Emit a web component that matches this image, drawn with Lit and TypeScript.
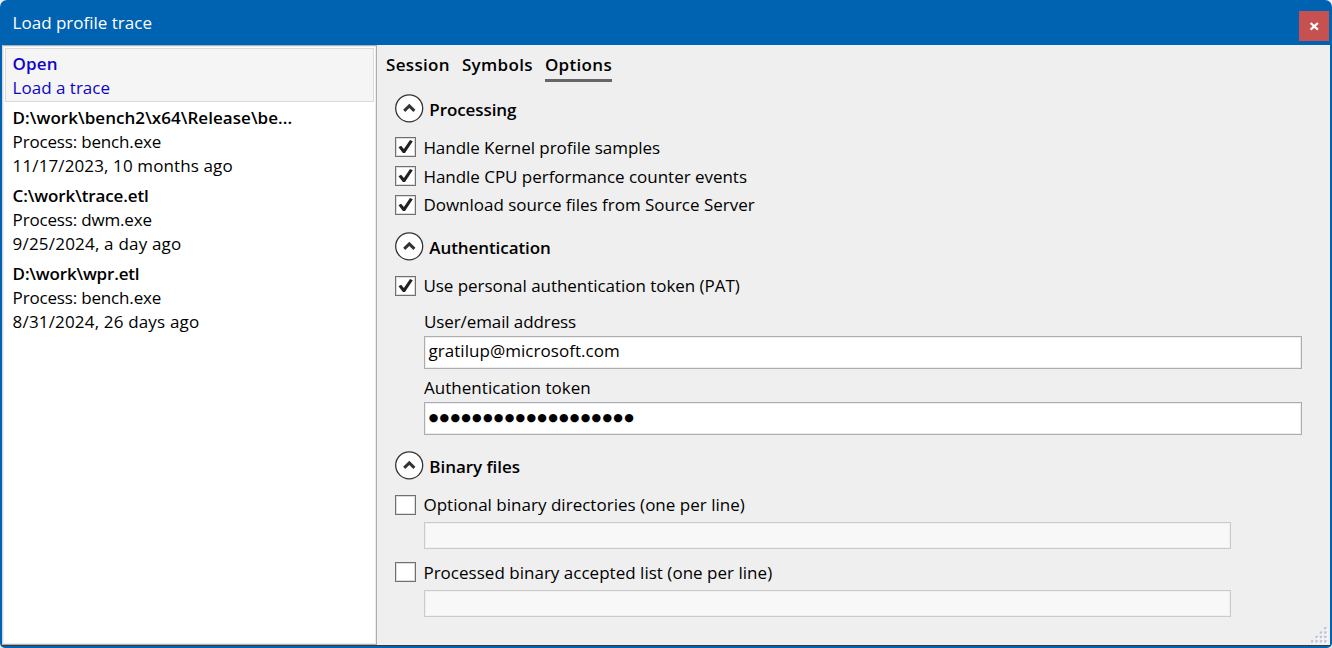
import { LitElement, html, svg, css } from "lit";
import { customElement, property } from "lit/decorators.js";
import { styleMap } from "lit/directives/style-map.js";

const text = (value: string, spacing = 0) =>
  html`<span style=${styleMap({ letterSpacing: `${spacing}px` })}>${value}</span>`;

@customElement("check-option")
class CheckOption extends LitElement {
  @property({ type: Boolean }) checked = false;
  @property() label = "";
  @property({ type: Number }) spacing = 0;

  static styles = css`
    :host { display: flex; height: 24px; }
    svg { flex: none; display: block; margin: var(--box-shift, 0) 7.4px 0 0; }
  `;

  render() {
    return html`
      <svg width="21" height="22" viewBox="0 0 21 22">
        <rect x="0.5" y="1.5" width="20" height="19" fill="#fff" stroke="#707070" />
        <rect x="1.5" y="2.5" width="18" height="17" fill="none" stroke="#dcdcdc" />
        ${this.checked
          ? svg`<path d="M3.5 11.2 L6.1 9.7 L8.9 12.9 L15 4.1 L17.8 5.2 L10 17.1 L7.9 17.1 Z" fill="#212121" />`
          : null}
      </svg>
      ${text(this.label, this.spacing)}
    `;
  }
}

@customElement("group-header")
class GroupHeader extends LitElement {
  @property() label = "";
  @property({ type: Number }) spacing = 0;

  static styles = css`
    :host { display: flex; height: 30px; font-weight: 600; line-height: 32px; }
    svg { flex: none; display: block; margin-right: 5.3px; }
  `;

  render() {
    return html`
      <svg width="29" height="30" viewBox="0 0 29 30">
        <circle cx="14.2" cy="14.3" r="13.5" fill="#fff" stroke="#333" stroke-width="1.3" />
        <path d="M9.2 16.9 L14.3 11.9 L19.4 16.9" fill="none" stroke="#333" stroke-width="2.9" />
      </svg>
      ${text(this.label, this.spacing)}
    `;
  }
}

const sessions = [
  { lines: [["Open", 0.1], ["Load a trace", 0]], selected: true },
  { lines: [["D:\\work\\bench2\\x64\\Release\\be...", 0.05], ["Process: bench.exe", -0.17], ["11/17/2023, 10 months ago", 0.12]] },
  { lines: [["C:\\work\\trace.etl", -0.12], ["Process: dwm.exe", -0.17], ["9/25/2024, a day ago", 0.2]] },
  { lines: [["D:\\work\\wpr.etl", -0.17], ["Process: bench.exe", -0.17], ["8/31/2024, 26 days ago", 0.17]] },
] as { lines: [string, number][]; selected?: boolean }[];

@customElement("app-root")
class AppRoot extends LitElement {
  static styles = css`
    :host {
      display: block;
      width: 1332px;
      height: 648px;
      background: #e9eef3;
      font: 17px/24px "Open Sans", "Noto Sans", sans-serif;
      color: #000;
    }
    * { box-sizing: border-box; }
    .window {
      position: relative;
      display: grid;
      grid-template-rows: 45px 1fr;
      height: 648px;
      padding: 0 2px 2px;
      background: #0063b1;
      border-radius: 7px 7px 5px 5px;
      overflow: hidden;
      white-space: nowrap;
    }
    .title {
      display: flex;
      justify-content: space-between;
      padding: 11px 1px 0 10.6px;
      color: #fff;
    }
    .close { display: block; width: 30px; height: 30px; background: #c75050; }
    .body {
      display: grid;
      grid-template-columns: 375px 1fr;
      background: #efefef;
      border-bottom: 1px solid #3a3a3a;
    }
    .list {
      padding: 2px;
      background: #fff;
      border: 1px solid #abadb3;
      border-left-color: #d5d6d9;
      box-shadow: inset 0 0 0 1px #ececee;
    }
    .item { display: grid; padding: 4px 8px 2px 7.6px; }
    .item span:first-child { font-weight: 600; }
    .selected {
      padding: 3px 6.6px 1px;
      border: 1px solid #dadada;
      background: #f5f5f5;
      color: #1004c8;
    }
    .main { padding: 7px 28px 0 9px; }
    .tabs { display: flex; gap: 12px; height: 42px; font-weight: 600; }
    .tab { height: 30px; padding-top: 1px; }
    .tab.active { border-bottom: 3px solid #666; }
    .content { display: grid; align-content: start; padding-left: 9px; }
    .checks { padding-top: 12px; display: grid; gap: 5px; }
    .checks check-option:last-child { margin-top: -1px; --box-shift: 1px; }
    .auth { margin-top: 15px; }
    .pat { margin-top: 12px; --box-shift: 1px; }
    .field { display: grid; gap: 2px; padding-left: 29px; }
    .input {
      height: 33px;
      padding: 2px 3.5px;
      background: #fff;
      border: 1px solid #abadb3;
      box-shadow: inset 0 0 0 1px #ededed;
    }
    .user { margin-top: 12px; }
    .token { margin-top: 7px; }
    .input.dots { padding-left: 3.7px; font: 11px/26px "DejaVu Sans", sans-serif; }
    .binary { margin-top: 16px; }
    .directories { margin-top: 12px; --box-shift: 1px; }
    .accepted { margin-top: 12px; }
    .area {
      width: 807px;
      height: 27px;
      margin: 5px 0 0 29px;
      background: #f8f8f8;
      border: 1px solid #cacaca;
      box-shadow: inset 0 0 0 1px #f0f0f0;
    }
    .grip { position: absolute; right: 4px; bottom: 3px; display: block; }
  `;

  render() {
    const dots = [[3, 0], [2, 1], [3, 1], [1, 2], [2, 2], [3, 2], [0, 3], [1, 3], [2, 3], [3, 3]];
    return html`
      <div class="window">
        <div class="title">
          ${text("Load profile trace", 0)}
          <svg class="close" viewBox="0 0 30 30">
            <path d="M11.6 12 L18.9 18.6 M18.9 12 L11.6 18.6" stroke="#fff" stroke-width="2.2" />
          </svg>
        </div>
        <div class="body">
          <div class="list">
            ${sessions.map((s) => html`<div class="item ${s.selected ? "selected" : ""}">${s.lines.map(([v, sp]) => text(v, sp))}</div>`)}
          </div>
          <div class="main">
            <div class="tabs">
              <div class="tab">${text("Session", 0.33)}</div>
              <div class="tab">${text("Symbols", 0.33)}</div>
              <div class="tab active">${text("Options", 0.33)}</div>
            </div>
            <div class="content">
              <group-header label="Processing" spacing="-0.08"></group-header>
              <div class="checks">
                <check-option checked label="Handle Kernel profile samples" spacing="-0.05"></check-option>
                <check-option checked label="Handle CPU performance counter events" spacing="-0.03"></check-option>
                <check-option checked label="Download source files from Source Server" spacing="-0.02"></check-option>
              </div>
              <group-header class="auth" label="Authentication" spacing="-0.08"></group-header>
              <check-option class="pat" checked label="Use personal authentication token (PAT)" spacing="-0.04"></check-option>
              <div class="field user">
                ${text("User/email address", -0.1)}
                <div class="input">${text("gratilup@microsoft.com", 0.04)}</div>
              </div>
              <div class="field token">
                ${text("Authentication token", 0.03)}
                <div class="input dots">${text("●".repeat(19), 1.26)}</div>
              </div>
              <group-header class="binary" label="Binary files" spacing="-0.05"></group-header>
              <check-option class="directories" label="Optional binary directories (one per line)" spacing="0.02"></check-option>
              <div class="area"></div>
              <check-option class="accepted" label="Processed binary accepted list (one per line)" spacing="0.02"></check-option>
              <div class="area"></div>
            </div>
          </div>
        </div>
        <svg class="grip" width="17" height="18" viewBox="0 0 17 18">
          ${dots.map(([x, y]) => svg`<rect x=${x * 4.4 + 1} y=${y * 4.4 + 1} width="2.4" height="2.4" fill="#fff" /><rect x=${x * 4.4} y=${y * 4.4} width="2.4" height="2.4" fill="#bcc4d8" />`)}
        </svg>
      </div>
    `;
  }
}
